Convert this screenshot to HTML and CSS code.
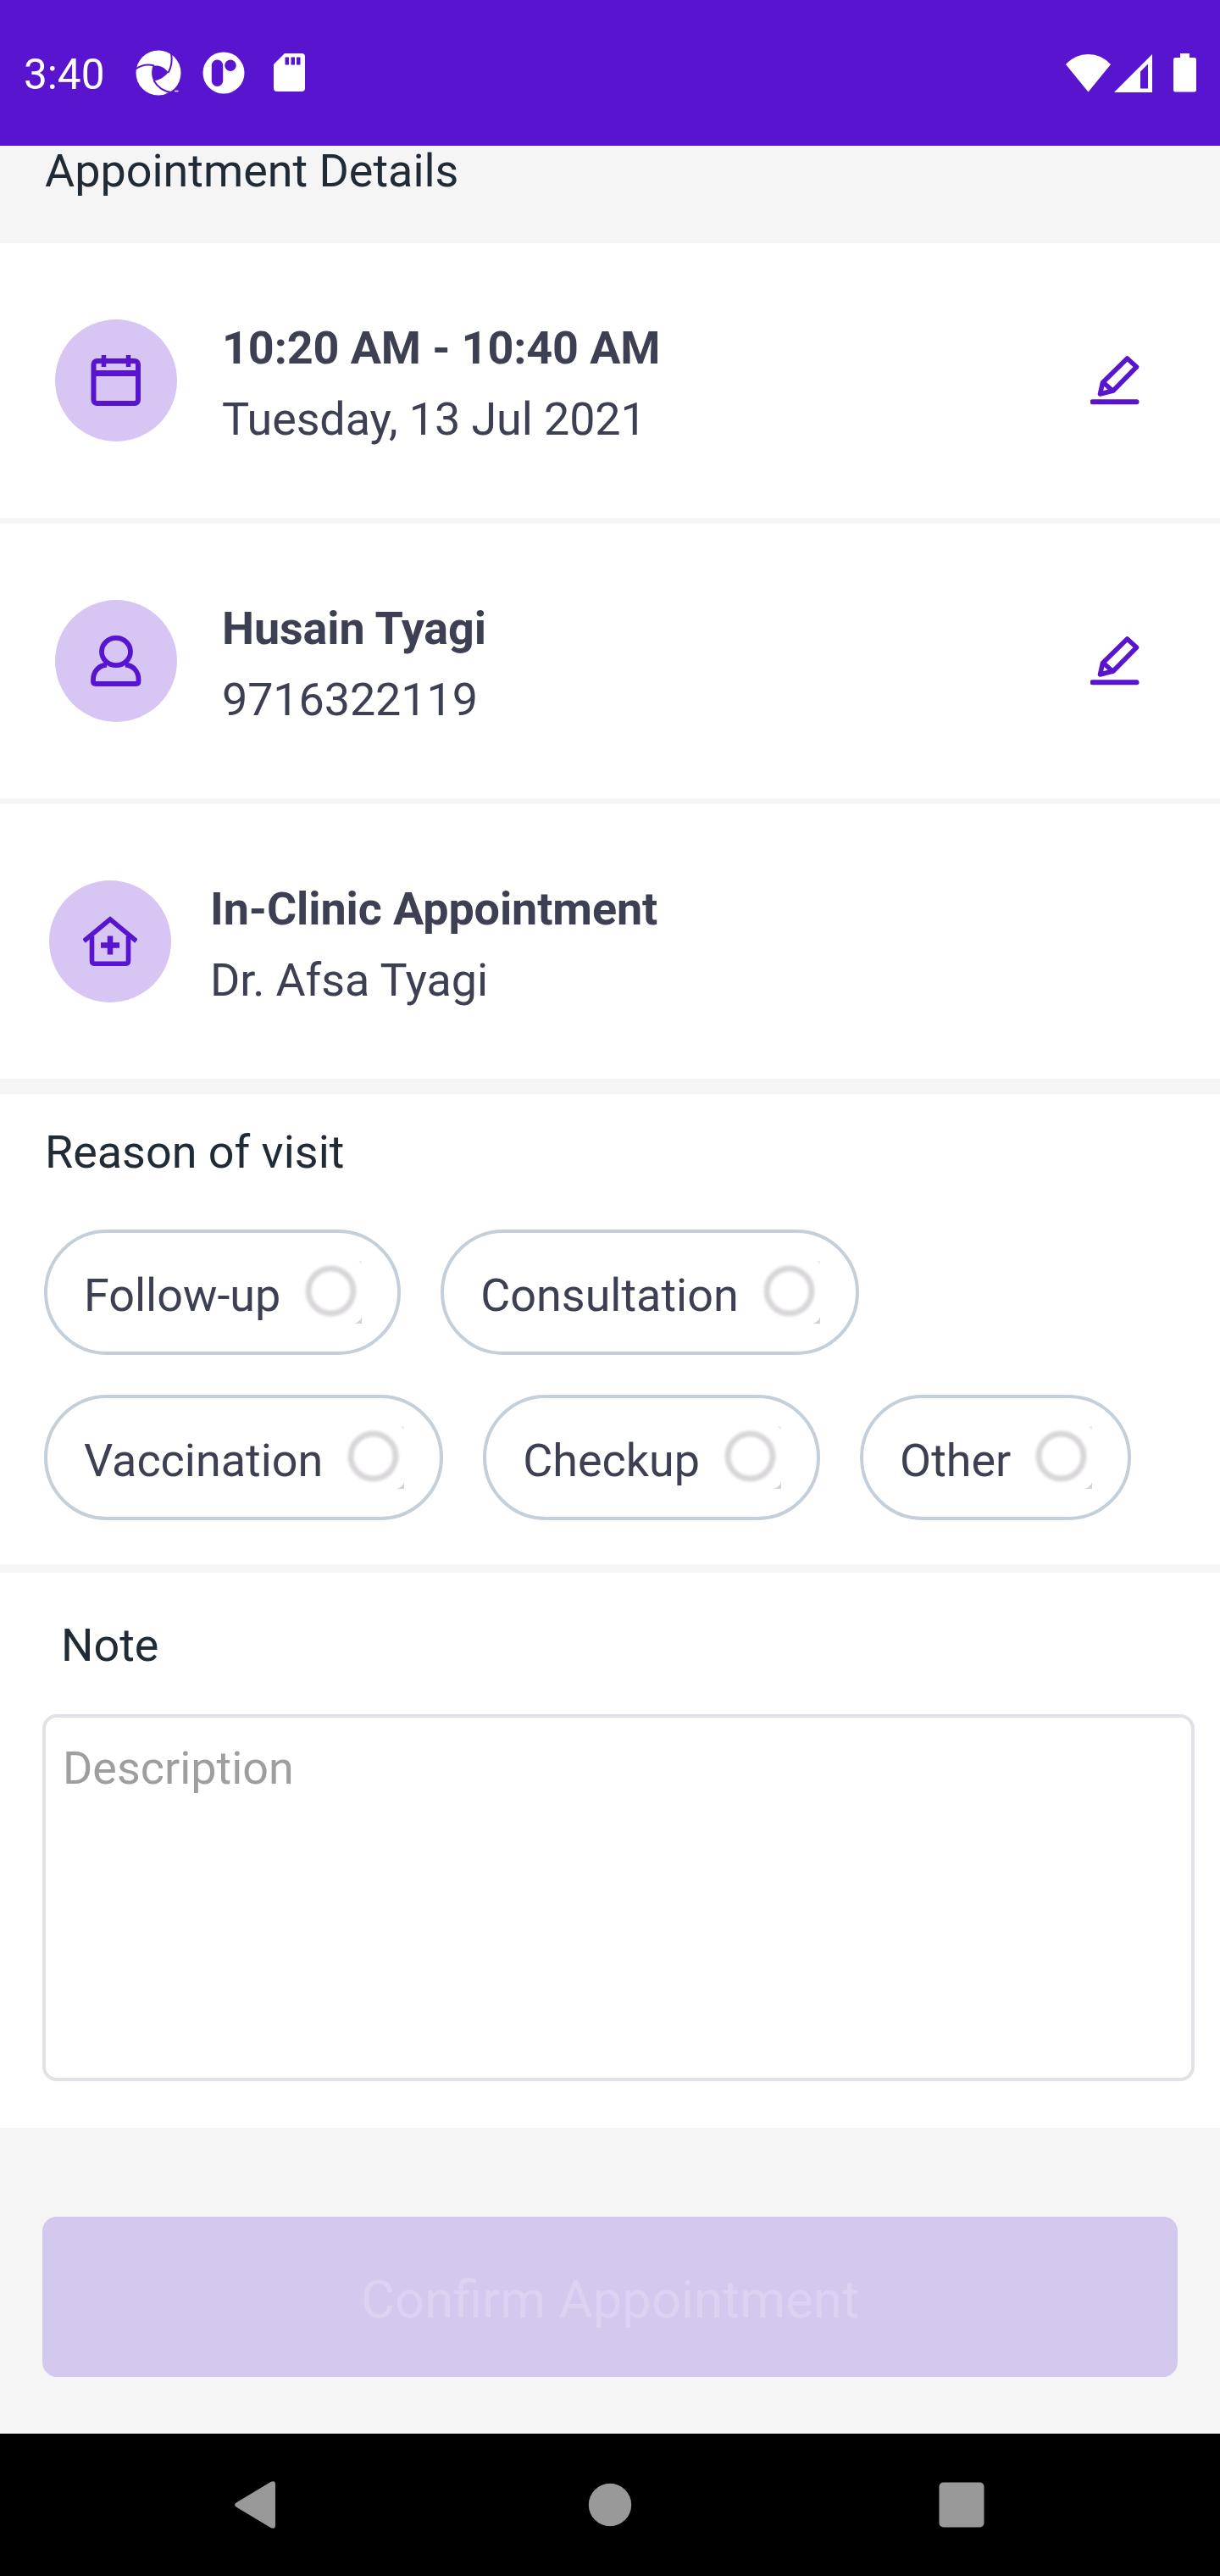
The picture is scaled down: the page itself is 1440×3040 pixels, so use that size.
FILE: index.html
```html
<!DOCTYPE html>
<html lang="en">
<head>
<meta charset="utf-8">
<title>Appointment Details</title>
<link rel="stylesheet" href="styles.css">
</head>
<body>
<svg width="0" height="0" class="defs">
  <defs>
    <filter id="soft" x="-10%" y="-10%" width="120%" height="120%"><feGaussianBlur stdDeviation="1.5"/></filter>
    <symbol id="radio" viewBox="0 0 74 74">
      <circle cx="37.500" cy="35.500" r="26.500" fill="none" stroke="#d9d6da" stroke-width="7" filter="url(#soft)"/>
      <path d="M74 66V74H65Q72 72 74 66Z" fill="#d4d2d5"/>
      <path d="M70 0H74V4Q71 3 70 0Z" fill="#efeef0"/>
    </symbol>
    <symbol id="pencil" viewBox="0 0 58 58">
      <g fill="none" stroke="#5814cf" stroke-width="5.600" stroke-linejoin="round" stroke-linecap="round">
        <path d="M43.500 3L54.500 13L27 41L11.500 45L14.500 31.500Z"/>
        <path d="M16 32L26 41"/>
        <path d="M2.500 54.300H54.500" stroke-width="6"/>
      </g>
    </symbol>
  </defs>
</svg>

<header class="status">
  <span class="time">3:40</span>
  <svg class="st-pinwheel" width="54" height="54" viewBox="0 0 54 54">
    <circle cx="27" cy="27" r="26.500" fill="#fff"/>
    <path d="M20.500 19C27 17.500 34 20 38.500 26.500C34 32 28.500 35.500 21.500 36.500C18.500 31 18.500 24.500 20.500 19Z" fill="#5814cf"/>
    <g fill="none" stroke="#5814cf" stroke-width="2">
      <path d="M0 22.500C7 17.500 14 16.500 22 18.500"/>
      <path d="M38.500 27C42.500 20 43.500 12 42 3.500"/>
      <path d="M21.500 36C26 44 33 49 43 50"/>
    </g>
    <path d="M40.500 3L44.500 6L41.500 1ZM36 51.500L44 48L54 44V54H34Z" fill="#5814cf"/>
    <path d="M46 48.500H50.500" stroke="#fff" stroke-width="1.500"/>
  </svg>
  <svg class="st-round" width="50" height="50" viewBox="0 0 50 50">
    <circle cx="25" cy="25" r="24.500" fill="#fff"/>
    <rect x="10.800" y="9.500" width="13.400" height="31.500" rx="6.700" fill="#5814cf"/>
    <circle cx="33" cy="16.200" r="6.700" fill="#5814cf"/>
  </svg>
  <svg class="st-card" width="37" height="46" viewBox="0 0 37 46">
    <path d="M13 0H33Q37 0 37 4V41Q37 45 33 45H4Q0 45 0 41V13Z" fill="#fff"/>
    <path d="M13.500 4.500H18V13.500H13.500ZM20.500 4.500H25V13.500H20.500ZM27 4.500H31.500V13.500H27Z" fill="#5814cf"/>
  </svg>
  <svg class="st-wifi" width="53" height="45" viewBox="0 0 53 45">
    <path d="M0 12Q11 0 26.500 0T53 12L26.500 44.500Z" fill="#fff"/>
  </svg>
  <svg class="st-signal" width="45" height="45" viewBox="0 0 45 45">
    <path fill-rule="evenodd" d="M45 0V45H0ZM40 11.500L31 20.500V40.500H40Z" fill="#fff"/>
  </svg>
  <svg class="st-battery" width="27" height="46" viewBox="0 0 27 46">
    <path d="M8 0H19V5H24.500Q27 5 27 7.500V43Q27 45.500 24.500 45.500H2.500Q0 45.500 0 43V7.500Q0 5 2.500 5H8Z" fill="#fff"/>
  </svg>
</header>

<main>
  <h1 class="heading">Appointment Details</h1>

  <section class="row">
    <span class="badge">
      <svg width="60" height="60" viewBox="0 0 60 60" fill="none" stroke="#5814cf" stroke-width="6">
        <rect x="3.500" y="7" width="52.500" height="50" rx="4"/>
        <path d="M3 21.500H56" stroke-width="7"/>
        <path d="M15.500 0V14M44.500 0V14" stroke-width="5.500"/>
      </svg>
    </span>
    <div class="info"><strong>10:20 AM - 10:40 AM</strong><span>Tuesday, 13 Jul 2021</span></div>
    <svg class="edit" width="58" height="58"><use href="#pencil"/></svg>
  </section>

  <section class="row">
    <span class="badge">
      <svg width="60" height="60" viewBox="0 0 60 60" fill="none" stroke="#5814cf" stroke-width="5.800">
        <ellipse cx="30" cy="19" rx="17" ry="16.200"/>
        <path d="M19 34.500C9 35.500 3 43 3 52V54Q3 57 6 57H53.500Q56.500 57 56.500 54V52C56.500 43 51 35.500 41 34.500"/>
      </svg>
    </span>
    <div class="info"><strong>Husain Tyagi</strong><span>9716322119</span></div>
    <svg class="edit" width="58" height="58"><use href="#pencil"/></svg>
  </section>

  <section class="row row-clinic">
    <span class="badge">
      <svg width="64" height="60" viewBox="0 0 64 60" fill="none" stroke="#5814cf" stroke-width="5.600">
        <path d="M1 29.500L32 3.800L63 29.500"/>
        <path d="M10.500 24V53Q10.500 56.300 14 56.300H50Q53.500 56.300 53.500 53V24"/>
        <path d="M21 34.500H43M32 23.500V45.500" stroke-width="6.500"/>
      </svg>
    </span>
    <div class="info"><strong>In-Clinic Appointment</strong><span>Dr. Afsa Tyagi</span></div>
  </section>

  <section class="reason">
    <h2>Reason of visit</h2>
    <div class="chips">
      <button class="chip"><span>Follow-up</span><svg width="74" height="74"><use href="#radio"/></svg></button>
      <button class="chip"><span>Consultation</span><svg width="74" height="74"><use href="#radio"/></svg></button>
      <button class="chip"><span>Vaccination</span><svg width="74" height="74"><use href="#radio"/></svg></button>
      <button class="chip"><span>Checkup</span><svg width="74" height="74"><use href="#radio"/></svg></button>
      <button class="chip"><span>Other</span><svg width="74" height="74"><use href="#radio"/></svg></button>
    </div>
  </section>

  <section class="note">
    <h2>Note</h2>
    <div class="field">Description</div>
  </section>

  <div class="footer"><button class="confirm">Confirm Appointment</button></div>
</main>

<nav class="navbar">
  <svg width="52" height="60" viewBox="0 0 52 60"><path d="M4.500 27L44.500 3Q50 0.500 50 6V54Q50 59.500 44.500 57L4.500 33Q-0.500 30 4.500 27Z" fill="#999"/></svg>
  <svg class="home" width="52" height="52" viewBox="0 0 52 52"><circle cx="26" cy="26" r="25.200" fill="#999"/></svg>
  <svg width="54" height="54" viewBox="0 0 54 54"><rect x="0.500" y="0.500" width="53" height="53" rx="5" fill="#999"/></svg>
</nav>
</body>
</html>
```
FILE: styles.css
```css
* { box-sizing: border-box; }

body {
  margin: 0;
  width: 1440px;
  height: 3040px;
  display: flex;
  flex-direction: column;
  background: #f5f5f5;
  color: #3d3f53;
  font-family: Roboto, "Liberation Sans", sans-serif;
  font-size: 53.9px;
  line-height: 64px;
  overflow: hidden;
}

svg { display: block; flex: none; }
.defs { position: absolute; }
button { font: inherit; color: inherit; margin: 0; }
h1, h2 { margin: 0; font-size: inherit; font-weight: 400; color: #212b36; }

/* Status bar */
.status {
  flex: none;
  height: 172px;
  display: flex;
  align-items: center;
  padding: 0 28px 0 28px;
  background: #5814cf;
  color: #fff;
}
.time { width: 132px; font-size: 49.500px; padding-top: 3px; }
.st-round { margin-left: 25px; }
.st-card { margin-left: 34px; }
.st-wifi { margin-left: auto; }
.st-signal { margin-left: 4px; }
.st-battery { margin-left: 25px; }

main {
  flex: 1;
  display: flex;
  flex-direction: column;
}

.heading {
  height: 115px;
  padding-left: 53px;
  line-height: 59px;
}

/* Detail rows */
.row {
  height: 324px;
  margin-bottom: 7px;
  padding: 0 95px 0 65px;
  display: flex;
  align-items: center;
  gap: 53px;
  background: #fff;
}
.row-clinic {
  margin-bottom: 18px;
  padding-left: 58px;
  gap: 46px;
}
.badge {
  flex: none;
  width: 144px;
  height: 144px;
  border-radius: 50%;
  display: flex;
  align-items: center;
  justify-content: center;
  background: #d7c5f4;
}
.badge svg, .edit { filter: blur(0.7px); }
.info {
  flex: 1;
  display: flex;
  flex-direction: column;
  padding-top: 7px;
  line-height: 84px;
  letter-spacing: -0.100px;
}
.info strong { font-weight: 700; }

/* Reason of visit */
.reason {
  height: 555px;
  margin-bottom: 10px;
  padding: 37px 52px 0;
  background: #fff;
}
.reason h2 { padding-left: 1px; }
.chips {
  display: flex;
  flex-wrap: wrap;
  gap: 47px;
  margin-top: 59px;
}
.chip {
  height: 148px;
  padding: 0 42px 0 43px;
  display: flex;
  align-items: center;
  gap: 22px;
  border: 4px solid #c5cfd9;
  border-radius: 74px;
  background: #fff;
}
.chip span { padding-top: 7px; }

/* Note */
.note {
  height: 655px;
  padding: 54px 30px 0 50px;
  background: #fff;
}
.note h2 { padding-left: 22px; }
.field {
  height: 433px;
  margin-top: 49px;
  padding: 28px 20px;
  border: 4px solid #e0e2e9;
  border-radius: 17px;
  color: #9e9e9e;
}

/* Footer */
.footer { padding: 105px 50px 0; }
.confirm {
  width: 100%;
  height: 189px;
  padding: 7px 0 0;
  border: 0;
  border-radius: 17px;
  background: #d4c8ee;
  color: #ddd2f1;
  font-size: 61.600px;
}

/* System navigation */
.navbar {
  flex: none;
  height: 168px;
  padding: 0 278px 0 275px;
  display: flex;
  align-items: center;
  justify-content: space-between;
  background: #000;
}
.home { margin-left: 5px; }
```
